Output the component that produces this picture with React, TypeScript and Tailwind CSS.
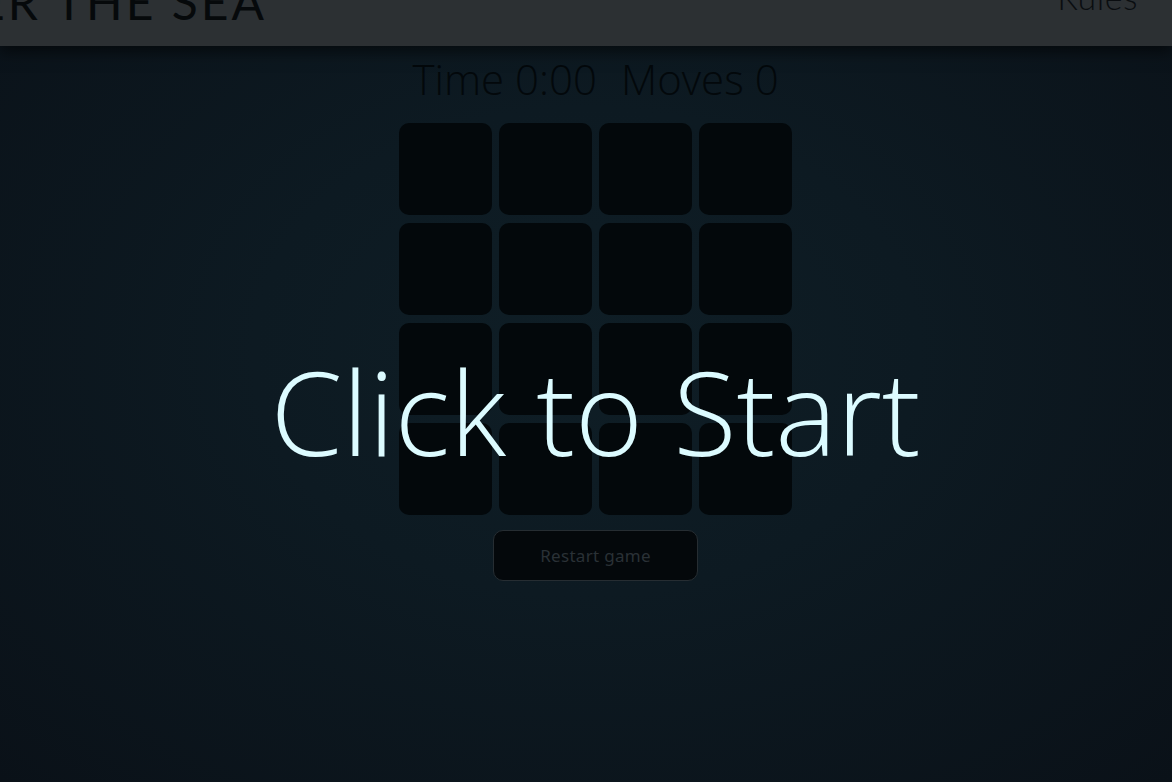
import React from "react";

export default function App() {
  const cards = Array.from({ length: 16 });
  return (
    <div className="relative h-[782px] w-full overflow-hidden bg-[radial-gradient(ellipse_at_50%_45%,#0f1e26_0%,#0d1a22_40%,#0a1118_100%)]">
      <header className="relative z-10 flex h-[46px] items-start justify-between bg-[#2c3033] shadow-[0_6px_14px_rgba(0,0,0,0.55)]">
        <div className="flex w-[267px] justify-end whitespace-nowrap">
          <span
            className="-mt-[22px] text-[48px] leading-none tracking-[3px] text-[#06090b]"
            style={{ fontFamily: "Lato, 'Noto Sans', sans-serif" }}
          >
            UNDER THE SEA
          </span>
        </div>
        <span
          className="-mt-[20px] mr-[34px] text-[34px] leading-none tracking-[0.5px] text-[#0a0d10]"
          style={{ fontFamily: "Lato, 'Noto Sans', sans-serif", fontWeight: 300 }}
        >
          Rules
        </span>
      </header>

      <main className="flex flex-col items-center pl-[19px]">
        <div
          className="mt-[7px] flex gap-[24px] text-[42px] leading-[52px] text-[#03080b]"
          style={{ fontFamily: "'Open Sans', 'Noto Sans', sans-serif", fontWeight: 300 }}
        >
          <span>Time 0:00</span>
          <span>Moves 0</span>
        </div>
        <div className="mt-[18px] grid grid-cols-[repeat(4,93px)] grid-rows-[repeat(4,92px)] gap-x-[7px] gap-y-[8px]">
          {cards.map((_, i) => (
            <div key={i} className="rounded-[10px] bg-[#03080b]" />
          ))}
        </div>
        <button
          className="mt-[15px] flex h-[51px] w-[205px] items-center justify-center rounded-[10px] border border-[#262d32] bg-[#04080b] text-[17px] tracking-[0.3px] text-[#2a3136]"
          style={{ fontFamily: "'Noto Sans', sans-serif" }}
        >
          Restart game
        </button>
      </main>

      <div className="absolute inset-0 z-20 flex items-center justify-center pl-[19px]">
        <span
          className="mt-[40px] text-[116px] leading-none text-[#dcfbff]"
          style={{ fontFamily: "'Open Sans', 'Noto Sans', sans-serif", fontWeight: 300 }}
        >
          Click to Start
        </span>
      </div>
    </div>
  );
}
